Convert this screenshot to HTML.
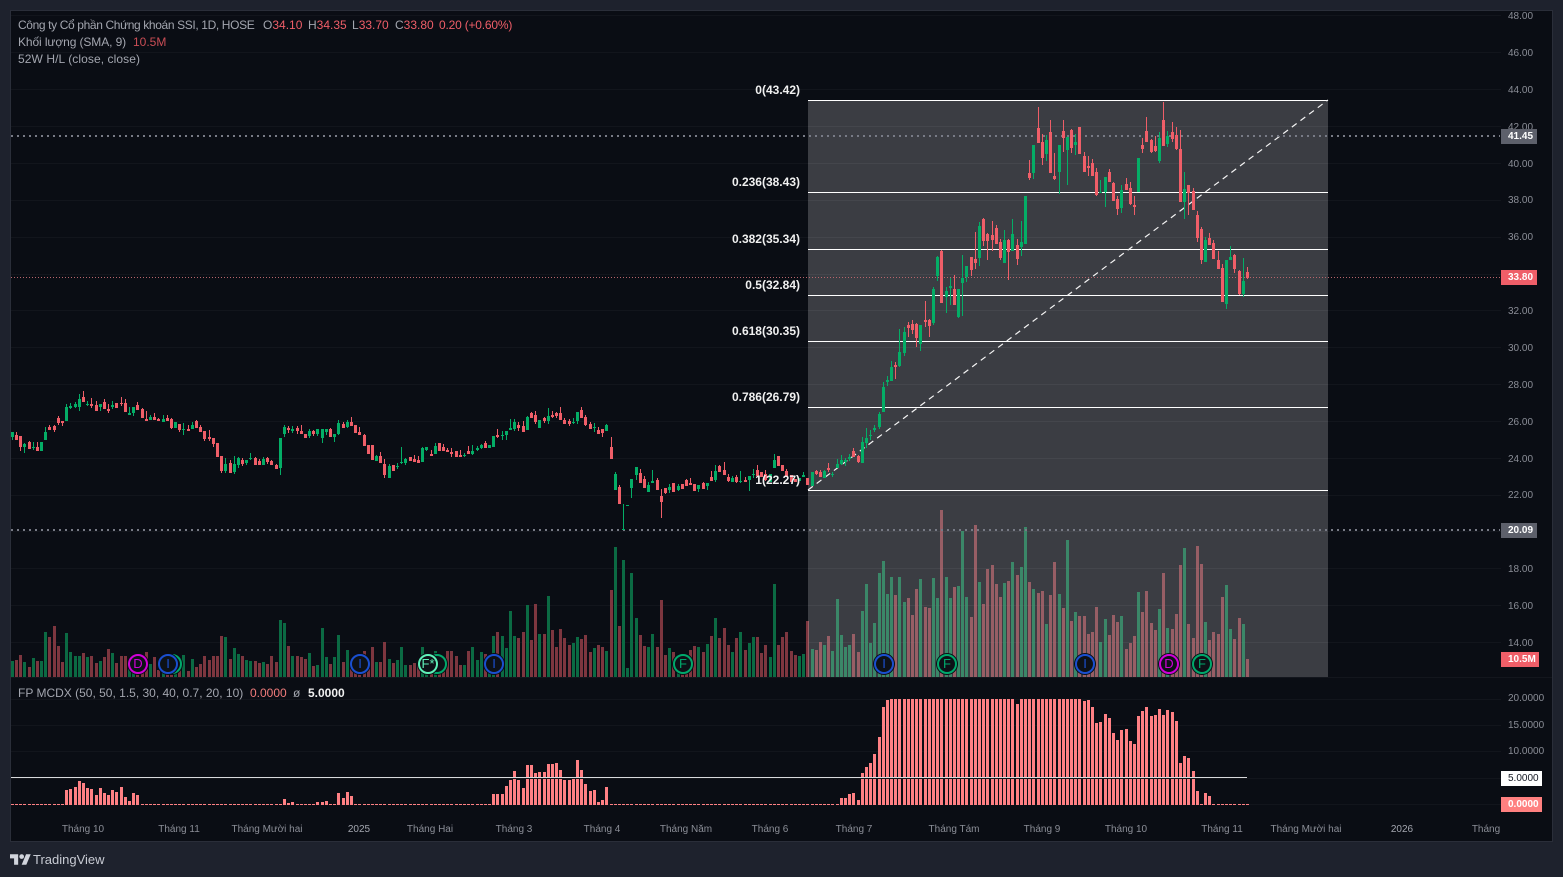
<!DOCTYPE html>
<html lang="vi"><head><meta charset="utf-8"><title>SSI Chart</title>
<style>
html,body{margin:0;padding:0;background:#1e222d;width:1563px;height:877px;overflow:hidden;font-family:"Liberation Sans","DejaVu Sans",sans-serif}
#chart{position:absolute;left:10px;top:10px;width:1541px;height:830px;background:#0a0d14;border:1px solid #2a2e39}
svg{position:absolute;left:0;top:0}
.t{position:absolute;white-space:nowrap;font-size:12px;line-height:14px;color:#a3a6af}
.r{color:#ef5e68}
.f{position:absolute;white-space:nowrap;font-size:12px;line-height:14px;color:#f0f0f0;font-weight:bold;right:763px;text-align:right}
.p{position:absolute;left:1508px;margin-top:1px;font-size:10px;line-height:12px;color:#8b8e97;white-space:nowrap}
.b{position:absolute;left:1501px;height:15px;line-height:15px;font-size:10px;font-weight:bold;color:#fff;padding-left:7px;box-sizing:border-box;white-space:nowrap}
.x{position:absolute;top:824px;font-size:10px;line-height:12px;color:#8b8e97;white-space:nowrap;transform:translateX(-50%)}
.e{position:absolute;width:20px;height:20px;box-sizing:border-box;border-radius:50%;border:2px solid;background:#0d1117;font-size:13px;line-height:16px;text-align:center;box-shadow:0 0 0 1px #0a0d14;top:654px}
</style></head><body>
<div id="chart"></div>
<svg id="s" width="1563" height="877" xmlns="http://www.w3.org/2000/svg"></svg>

<div class="t" style="left:18px;top:18px;letter-spacing:-.37px">Công ty Cổ phần Chứng khoán SSI, 1D, HOSE</div>
<div class="t" style="left:263px;top:18px">O<span class="r">34.10</span></div>
<div class="t" style="left:308px;top:18px">H<span class="r">34.35</span></div>
<div class="t" style="left:352px;top:18px">L<span class="r">33.70</span></div>
<div class="t" style="left:395px;top:18px">C<span class="r">33.80</span></div>
<div class="t r" style="left:439px;top:18px;letter-spacing:-.2px">0.20 (+0.60%)</div>
<div class="t" style="left:18px;top:35px;letter-spacing:-.1px">Khối lượng (SMA, 9)</div>
<div class="t" style="left:133px;top:35px;color:#c94d55">10.5M</div>
<div class="t" style="left:18px;top:52px;letter-spacing:.08px">52W H/L (close, close)</div>
<div class="t" style="left:18px;top:686px">FP MCDX (50, 50, 1.5, 30, 40, 0.7, 20, 10)</div>
<div class="t" style="left:250px;top:686px;color:#f27c7c">0.0000</div>
<div class="t" style="left:293px;top:686px">ø</div>
<div class="t" style="left:308px;top:686px;color:#f0f0f0;font-weight:bold">5.0000</div>

<div class="f" style="top:83px">0(43.42)</div>
<div class="f" style="top:175px">0.236(38.43)</div>
<div class="f" style="top:232px">0.382(35.34)</div>
<div class="f" style="top:278px">0.5(32.84)</div>
<div class="f" style="top:324px">0.618(30.35)</div>
<div class="f" style="top:390px">0.786(26.79)</div>
<div class="f" style="top:473px">1(22.27)</div>

<div class="p" style="top:10px">48.00</div>
<div class="p" style="top:47px">46.00</div>
<div class="p" style="top:84px">44.00</div>
<div class="p" style="top:121px">42.00</div>
<div class="p" style="top:158px">40.00</div>
<div class="p" style="top:194px">38.00</div>
<div class="p" style="top:231px">36.00</div>
<div class="p" style="top:305px">32.00</div>
<div class="p" style="top:342px">30.00</div>
<div class="p" style="top:379px">28.00</div>
<div class="p" style="top:416px">26.00</div>
<div class="p" style="top:453px">24.00</div>
<div class="p" style="top:489px">22.00</div>
<div class="p" style="top:563px">18.00</div>
<div class="p" style="top:600px">16.00</div>
<div class="p" style="top:637px">14.00</div>
<div class="p" style="top:692px">20.0000</div>
<div class="p" style="top:719px">15.0000</div>
<div class="p" style="top:745px">10.0000</div>

<div class="b" style="top:129px;width:36px;background:#5d606b">41.45</div>
<div class="b" style="top:270px;width:36px;background:#ef5e68">33.80</div>
<div class="b" style="top:523px;width:36px;background:#5d606b">20.09</div>
<div class="b" style="top:652px;width:38px;background:#ef5e68">10.5M</div>
<div class="b" style="top:771px;width:41px;background:#fff;color:#131722;font-weight:normal">5.0000</div>
<div class="b" style="top:797px;width:41px;background:#ff8080">0.0000</div>

<div class="x" style="left:83px">Tháng 10</div>
<div class="x" style="left:179px">Tháng 11</div>
<div class="x" style="left:267px">Tháng Mười hai</div>
<div class="x" style="left:359px;color:#a3a6af">2025</div>
<div class="x" style="left:430px">Tháng Hai</div>
<div class="x" style="left:514px">Tháng 3</div>
<div class="x" style="left:602px">Tháng 4</div>
<div class="x" style="left:686px">Tháng Năm</div>
<div class="x" style="left:770px">Tháng 6</div>
<div class="x" style="left:854px">Tháng 7</div>
<div class="x" style="left:954px">Tháng Tám</div>
<div class="x" style="left:1042px">Tháng 9</div>
<div class="x" style="left:1126px">Tháng 10</div>
<div class="x" style="left:1222px">Tháng 11</div>
<div class="x" style="left:1306px">Tháng Mười hai</div>
<div class="x" style="left:1402px;color:#a3a6af">2026</div>
<div class="x" style="left:1486px">Tháng</div>

<div class="e" style="left:162px;border-color:#00a86b;color:#00a86b">F</div>
<div class="e" style="left:128px;border-color:#d000d8;color:#d000d8">D</div>
<div class="e" style="left:158px;border-color:#1a4fd0;color:#1a4fd0">I</div>
<div class="e" style="left:350px;border-color:#1a4fd0;color:#1a4fd0">I</div>
<div class="e" style="left:427px;border-color:#00a86b;color:#00a86b"></div>
<div class="e" style="left:418px;border-color:#5ff0b8;color:#5ff0b8">F*</div>
<div class="e" style="left:484px;border-color:#1a4fd0;color:#1a4fd0">I</div>
<div class="e" style="left:673px;border-color:#00a86b;color:#00a86b">F</div>
<div class="e" style="left:874px;border-color:#1a4fd0;color:#1a4fd0">I</div>
<div class="e" style="left:937px;border-color:#00a86b;color:#00a86b">F</div>
<div class="e" style="left:1075px;border-color:#1a4fd0;color:#1a4fd0">I</div>
<div class="e" style="left:1159px;border-color:#d000d8;color:#d000d8">D</div>
<div class="e" style="left:1192px;border-color:#00a86b;color:#00a86b">F</div>

<svg width="21" height="11" viewBox="0 0 36 18" style="left:10px;top:854px"><path fill="#d1d4dc" d="M14 18H7V7H0V0h14v18zM28 18h-8l7.5-18h8L28 18z"/><circle fill="#d1d4dc" cx="20" cy="4" r="4"/></svg>
<div style="position:absolute;left:33px;top:852px;font-size:13px;line-height:15px;color:#c8cbd3;white-space:nowrap">TradingView</div>

<script>
var S1="g156,170,,179 r165,180,156, r168,201,,213 g192,201,189,219 r186,207,183, g201,204,186,210 r201,213,186, g186,213 g156,180,141, r141,150,135, r138,150,135,156 r114,129,108,135 r123,129,,138 g81,123,72, g78,84,69,87 g72,81,66,84 g57,81,42,93 r51,66,33, g72,75,63,78 r72,78,54,84 r75,93,63, g72,81,72,93 r66,87,57, r87,93,72,99 g75,81,63,87 r69,84 r69,72,51,78 r69,96,57, g99,105,81,105 g81,99,81,108 r75,90,66, r87,114,84, r117,123,93, g111,120,105, r111,120,99, r117,123,114, g117,126,105, r114,123,105, r117,144,114,147 g126,144 r132,150,132,156 g147,150,129,165 r147,153,135, g135,147,126, r123,144,120, r141,156,135, r153,177,153,183 r171,177,150,183 r174,192,174,201 r189,231 r228,273,228,279 g252,273,234,279 r249,279,240, g252,276,228,282 g234,255,231,264 r240,252,234,258 g240,249,240,255 g234,237,219,240 r234,255,231, r243,255,237, g237,255,231, r234,246,231,252 r243,255,240, r255,267,252, g174,264,174,285 g141,162,135,171 r144,150,138,159 g147,153,138,159 r144,153,138,162 r153,162,135, r162,174,162, g153,168,147,174 r153,162,150,168 g147,162,147,168 g147,174,147,189 g147,156,147,165 r147,171,144, g162,171,162,186 g129,162,120,165 r132,144,126, g126,141,120,144 r126,138,111, r135,159 r156,165,141, r165,198,162, r195,222 r195,240 g228,243,225, r228,249,216, r252,285,237,294 g258,294,252, r255,273 g258,261,249,267 g246,249,201,252 g236,249,233,255 r231,243 r237,246,225, r240,249,228,";
var S2="g174,216,171, g171,180,171,183 r192,198,180, g168,192,159, r159,183 r171,183,162, r180,186,174, r186,192,174,201 r183,201 r195,201,180, g195,198,189,201 r183,192,168, g183,192,165,195 g174,180,168,183 g165,174,162,177 r159,174,153, g165,174 g138,171 r135,141,117,144 g135,138,123,150 g123,135,123,150 g114,120,87,120 g96,117,87,123 r105,114,96,123 r108,126,93, g81,120,78, r69,84,66, r75,96,63,102 g90,114 r84,93,81,99 g78,93,54,102 r75,81,63,84 r69,78,66,84 r69,90,51, r90,102,84, r93,102,87,108 g96,99,84,102 g66,93,66,102 r60,84,51, r81,105,75,108 r102,117,96, g111,114,99,126 r120,132,111, r117,129,117,141 g105,123,102, r171,207,141, g252,300,246, r291,342,285, g417,420,342,420 g345,347 g267,294,267,324 g231,255,231,270 r249,279,237, r267,294,258, g285,306,276, g273,279,240, r270,300,264, r318,336,297,384 r294,309,294,312 g291,300,282,309 r279,306 g288,300,282,303 r282,297 r270,288,267, r279,285,264, r282,303 g285,297,285,306 r279,297,276, g279,288,279,300 r261,273,243, g243,270,225,276 r228,246,225, r240,255,216, r261,273,252,276 g264,276,258,276 r261,276,255,279 g273,276,243,279 r270,276,261, g258,270,258,303 g252,255,237,264 r240,258,225, r246,261 r252,270,240,273 g252,276 g210,234,192, r198,228 r225,243 r243,261,237, r255,276 r267,276 g264,273 g255,261,246,";
var S3="r833,855 g816,858 r813,821,810,825 r815,831,810, g813,834,810, r804,810,789,816 g822,824,816,830 g792,804,778, g780,792,765,795 g780,786,774,798 g771,777,762,783 r753,771,744, r768,786,765,789 g726,789,711, g714,729,684,744 g705,708,690,720 g684,690,675,696 g642,681,636,687 g561,636,546, g540,546,528,558 g501,543,483, r495,501,486,537 g456,498,387,501 g396,459,381,468 r375,384,366,411 r372,390,360,402 r372,414,369,441 g375,432,375,453 r360,366,303,381 r360,378,357,411 g267,369,261,375 g171,228,168,243 r153,309,150, g273,291,261,339 g258,264,234,315 r267,315,225, g267,351,267,354 g234,249,165,348 g198,231,198,246 r171,210,171,228 r177,189,96,207 g78,174,66,198 r57,123,54,138 r102,123,99,180 r105,120,63,153 r84,132,75, r126,174,117,180 g120,189,90, r120,156,117,240 g102,153,57, r135,177,117,195 g126,141,63,168";
var S4="g318,462 r250,264,210,270 g165,249,165,267 r114,159,51, r156,204,132,225 g150,192,135,213 r126,249,90, r258,267,189,270 g165,246,165,312 r123,144,90,186 g141,180,141,285 r120,174,117,189 g156,165,132,195 r111,192 r198,246,186, r228,234,198,258 r219,258,207, r246,315,234,318 g305,307,270,307 g261,306,261,351 r246,276,237, r279,333,276, r327,357,318,375 g300,354,285,369 r282,300,264, r294,342,276,345 r345,351,318,375 g204,306 r165,177,144,189 r123,156,81, r150,186,147,189 r168,183,138,186 g144,213,126,219 r90,168,36, g138,162,123,171 r126,147,96,156 r135,177,111,180 r177,336,120, g297,336,246,387 r285,309,285,375 r303,360,294, r375,444,363,456 r417,510,411,522 g450,516,441, r444,465,429, r459,507,450, r510,537,483, r534,636,522, g510,642,510,657 g501,510,468, r495,537,492,549 r543,612,540,615 g573,612,504,621 r546,564,531,567";
var C=[];
function add(str,off){str.split(" ").forEach(function(c){var a=c.slice(1).split(",");var t=+a[0],b=+a[1],h=a[2]?+a[2]:t,l=a[3]?+a[3]:b;C.push({g:c[0]=="g",t:off+t/3,b:off+b/3,h:off+Math.min(h,t)/3,l:off+Math.max(l,b)/3});});}
add(S1,380);add(S2,390);add(S3,200);add(S4,90);
var V=[48,51,66,45,30,57,48,48,135,120,153,93,45,132,75,63,63,72,60,63,42,48,60,84,72,42,63,63,40,20,30,36,75,40,60,20,30,40,50,40,30,66,18,54,30,39,63,51,63,63,123,120,54,87,69,63,51,48,48,42,45,39,63,45,171,162,93,63,63,60,54,72,33,36,147,60,39,60,126,45,81,51,60,60,78,50,90,45,45,105,54,42,51,90,36,36,42,40,90,45,30,78,40,30,78,78,63,36,36,78,90,51,75,69,60,123,135,123,87,198,123,117,135,216,111,219,129,129,243,141,90,144,117,96,102,120,114,126,75,87,96,90,78,261,390,153,351,27,312,177,126,93,90,129,90,231,66,87,75,40,20,50,81,93,90,75,99,123,177,117,147,96,75,117,135,81,102,120,120,72,96,60,279,96,120,135,78,66,63,69,168,84,81,105,96,123,78,234,126,90,96,129,75,198,279,102,162,312,348,249,300,246,300,225,237,186,264,294,210,207,297,237,501,300,237,270,273,438,240,180,456,285,219,324,336,279,240,282,288,345,306,330,450,285,264,252,258,159,246,345,249,207,411,168,195,183,183,129,135,210,105,174,126,186,165,183,84,102,123,255,195,258,162,141,204,312,147,144,189,336,387,159,117,393,339,165,111,135,129,240,276,144,114,177,159,54];
var M=[];for(var i=0;i<296;i++)M[i]=1;
function ms(st,base,a){a.forEach(function(t,k){M[st+k]=Math.max(1,(base-t)/3);});}
ms(13,615,[570,567,561,543,549,564,567,585,564,579,585,570,576,561,591,603,579,585]);
ms(65,615,[597,609,606]);ms(73,615,[606,606,603]);ms(78,615,[579,594,576,588]);ms(115,615,[582,582]);
ms(117,165,[132,108,90,63,90,114,45,45,69,66,66,42,42,39,60,90,90,84,30,60,102,123,120,156,150,111]);
ms(198,375,[354,354,342,339,360,279,261,249,222,171,81,60]);
for(i=210;i<256;i++)M[i]=106;M[240]=101;
ms(256,375,[63,60,81,129,126,102,114,159,180,150,147,183,192,108,93,81,108,105,87,105,90,96,123,249,228,234,273,333,372,339,348]);
function cx(i){return Math.floor(12.3+4.187*i);}
var o=[];
function rect(x,y,w,h,f,extra){o.push('<rect x="'+x+'" y="'+y+'" width="'+w+'" height="'+h+'" fill="'+f+'"'+(extra||'')+' shape-rendering="crispEdges"/>');}
var gridY=[15,52,89,126,163,200,237,274,310,347,384,421,458,495,531,568,605,642,699,725,751,778,804];
gridY.forEach(function(y){rect(11,y,1490,1,"#12151c");});
rect(11,677,1541,1,"#13161d");
V.forEach(function(v,i){var h=Math.round(v/3);rect(cx(i)-1,677-h,3,h,C[i].g?"#0b6a43":"#7d363f");});
rect(808,100,520,577,"#ffffff",' fill-opacity="0.2"');
gridY.slice(0,18).forEach(function(y){if(y>100)rect(808,y,520,1,"#ffffff",' fill-opacity="0.02"');});
[100,192,249,295,341,407,490].forEach(function(y){rect(808,y,520,1,"#ffffff");});
o.push('<line x1="808" y1="490" x2="1328" y2="100" stroke="#f4f4f4" stroke-width="1.2" stroke-dasharray="6 4.8"/>');
o.push('<line x1="11" y1="136" x2="1500" y2="136" stroke="#787b86" stroke-width="2" stroke-dasharray="2 4"/>');
o.push('<line x1="11" y1="530" x2="1500" y2="530" stroke="#787b86" stroke-width="2" stroke-dasharray="2 4"/>');
o.push('<line x1="11" y1="277.5" x2="1500" y2="277.5" stroke="#b8656c" stroke-width="1" stroke-dasharray="1 2"/>');
C.forEach(function(c,i){var x=cx(i),f=c.g?"#04ad66":"#ef5e68";var top=Math.round(c.t),bot=Math.round(c.b);var ht=Math.round(c.h),lw=Math.round(c.l);rect(x,ht,1,Math.max(lw-ht,1),f);rect(x-1,top,3,Math.max(bot-top,1),f);});
M.forEach(function(h,i){var r=Math.round(h);rect(cx(i)-1,805-r,3,r,"#ff8084");});
rect(11,778,1236,1,"#14161b");
rect(11,777,1236,1,"#d8d9dc");
document.getElementById("s").innerHTML=o.join("");
</script>
</body></html>
